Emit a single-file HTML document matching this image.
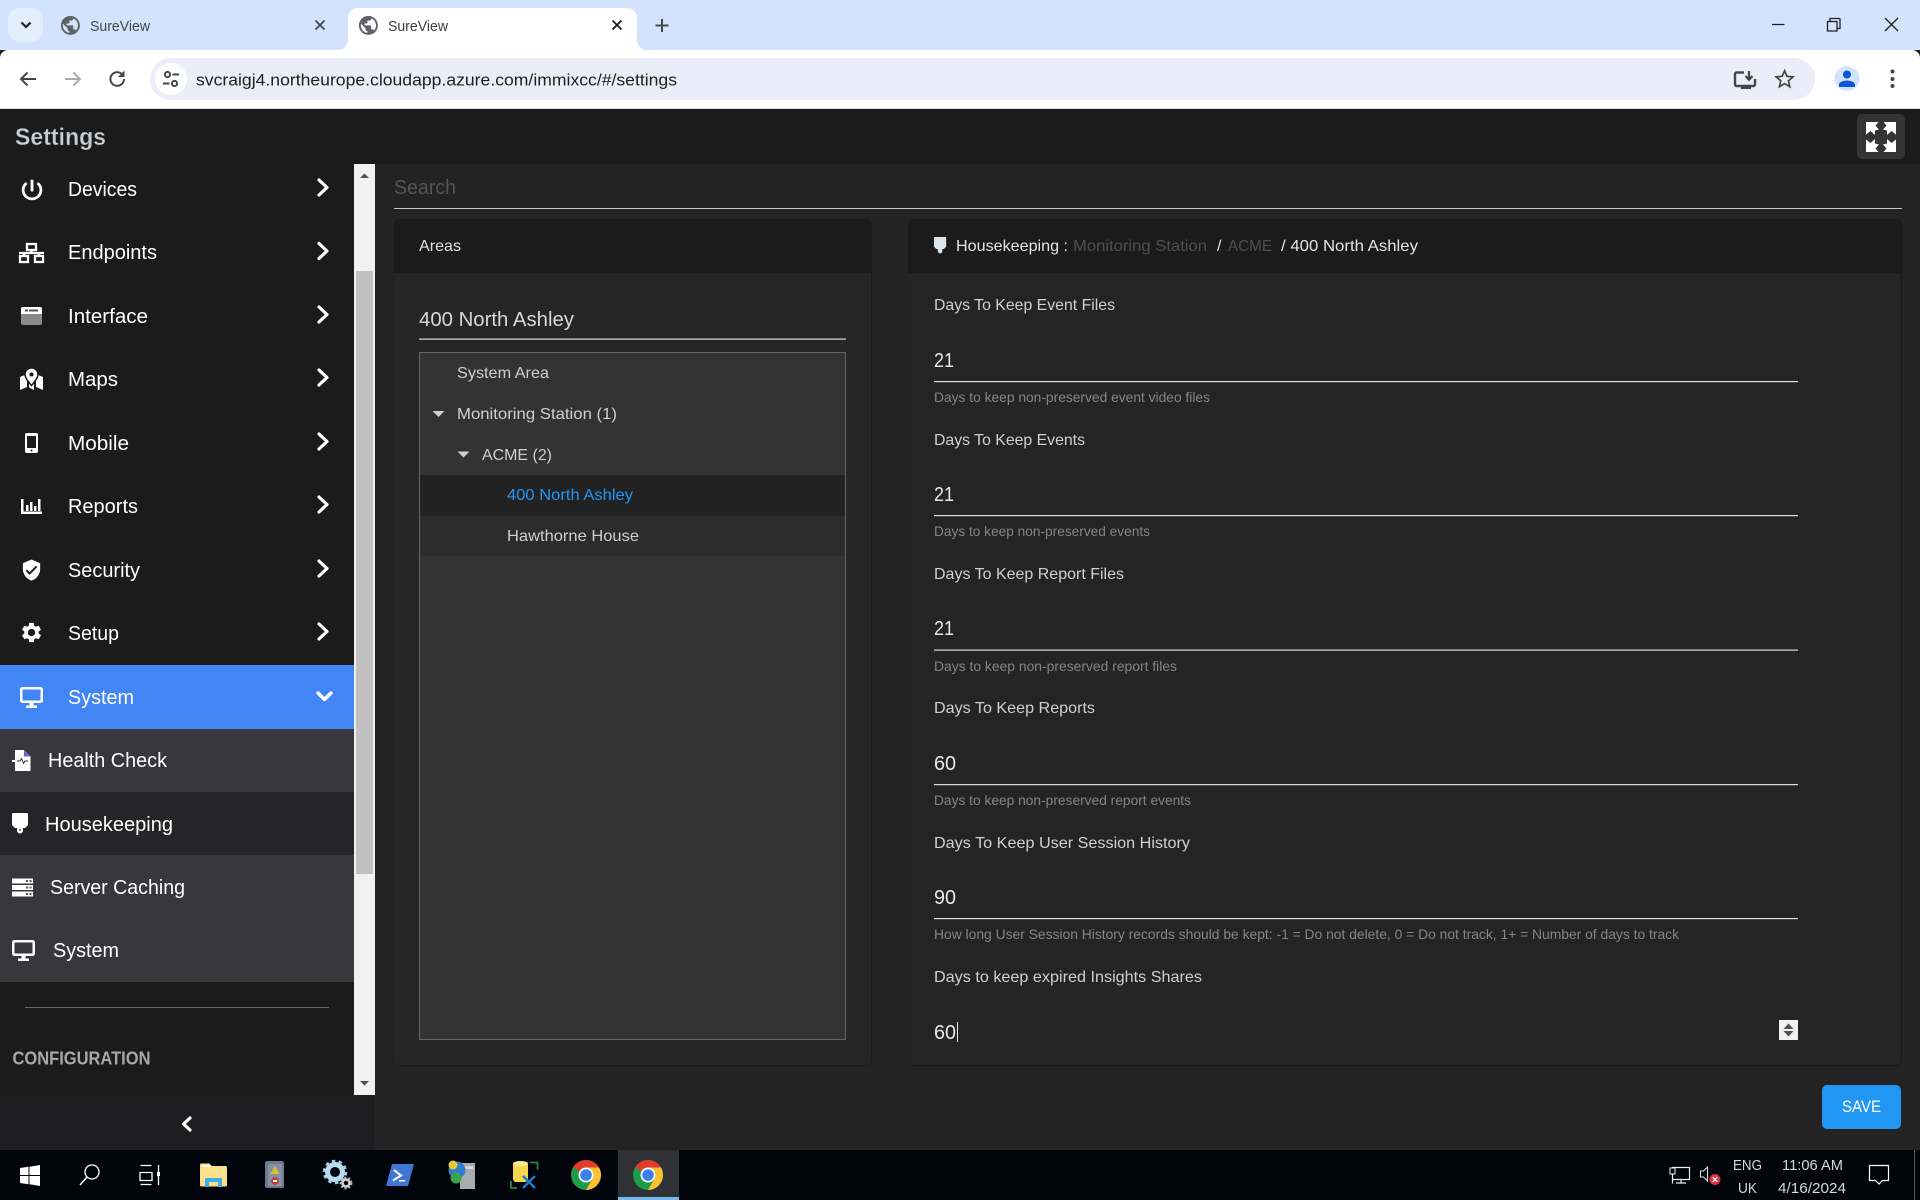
<!DOCTYPE html>
<html lang="en"><head><meta charset="utf-8"><title>SureView</title>
<style>
html,body{margin:0;padding:0;width:1920px;height:1200px;overflow:hidden;background:#232323}
svg{display:block}
text{font-family:"Liberation Sans",Arial,sans-serif;white-space:pre}
.nav{font-size:20px;fill:#fff}
.lab{font-size:16px;fill:#d0d0d0}
.val{font-size:20px;fill:#e8e8e8}
.hint{font-size:14px;fill:#858585}
.tree{font-size:16px;fill:#cfcfcf}
.tb{font-size:15px;fill:#d8d8d8}
.chev{fill:none;stroke:#fff;stroke-width:3.2;stroke-linecap:round;stroke-linejoin:round}
</style></head><body>
<svg width="1920" height="1200" viewBox="0 0 1920 1200" xmlns="http://www.w3.org/2000/svg">
<defs>
<path id="globe" d="M12 2C6.48 2 2 6.48 2 12s4.48 10 10 10 10-4.48 10-10S17.52 2 12 2zm-1 17.93c-3.95-.49-7-3.85-7-7.93 0-.62.08-1.21.21-1.79L9 15v1c0 1.1.9 2 2 2v1.93zm6.9-2.54c-.26-.81-1-1.39-1.9-1.39h-1v-3c0-.55-.45-1-1-1H8v-2h2c.55 0 1-.45 1-1V7h2c1.1 0 2-.9 2-2v-.41c2.93 1.19 5 4.06 5 7.41 0 2.08-.8 3.97-2.1 5.39z"/>
<g id="chrome">
<circle cx="0" cy="0" r="15" fill="#1e9c4b"/>
<path d="M-13 -7.5A15 15 0 0 1 13 -7.5L0 -7.5A7.5 7.5 0 0 0 -6.5 -3.7Z" fill="#e33b2e"/>
<path d="M13 -7.5A15 15 0 0 1 0 15L6.5 3.7A7.5 7.5 0 0 0 6.5 -3.7Z M13 -7.5L0 -7.5L6.5 -3.7Z" fill="#fbc02d"/>
<circle cx="0" cy="0" r="7.5" fill="#fff"/><circle cx="0" cy="0" r="5.8" fill="#3d7fe8"/>
</g>
<path id="tdown" d="M-6 -3L6 -3L0 3Z"/>
<path id="hk" d="M1 0h14a1 1 0 0 1 1 1v11l-3 3h-2v2.500a3 3 0 0 1-6 0V15H3l-3-3V1a1 1 0 0 1 1-1z"/>
<g id="desk"><path fill-rule="evenodd" d="M2.500 0h18A2.500 2.500 0 0 1 23 2.500v11a2.500 2.500 0 0 1-2.500 2.500h-18A2.500 2.500 0 0 1 0 13.500v-11A2.500 2.500 0 0 1 2.500 0zM2.500 2.500v11h18v-11z"/><path d="M9.500 16h4v2.500h3.500V21H6v-2.500h3.500z"/></g>
<path id="fsq" d="M1866 122H1878.500L1875.500 125.500L1879 129.500L1875 130.500V135L1870.500 131L1866 134.500Z"/>
</defs>

<!-- browser chrome -->
<rect x="0" y="0" width="1920" height="50" fill="#d3e3fd"/>
<rect x="8" y="8" width="35" height="34" rx="12" fill="#e4edfc"/>
<path d="M21.500 22.500L26 27L30.500 22.500" fill="none" stroke="#1f1f1f" stroke-width="2.200"/>
<use href="#globe" transform="translate(59,14) scale(.95)" fill="#5f6368"/>
<text x="90" y="31" font-size="15" fill="#444746" textLength="60" lengthAdjust="spacingAndGlyphs">SureView</text>
<path d="M315.500 20.500l9 9m0-9l-9 9" stroke="#444746" stroke-width="1.800" fill="none"/>
<path d="M0 108V58a8 8 0 0 1 8-8H338a10 10 0 0 0 10-10V18a10 10 0 0 1 10-10H627a10 10 0 0 1 10 10V40a10 10 0 0 0 10 10H1912a8 8 0 0 1 8 8V108Z" fill="#fff"/>
<use href="#globe" transform="translate(357,14) scale(.95)" fill="#5f6368"/>
<text x="388" y="31" font-size="15" fill="#3c4043" textLength="60" lengthAdjust="spacingAndGlyphs">SureView</text>
<path d="M612.500 20.500l9 9m0-9l-9 9" stroke="#1f1f1f" stroke-width="1.800" fill="none"/>
<path d="M662 19v13M655.500 25.500h13" stroke="#444746" stroke-width="2" fill="none"/>
<path d="M1772 24.500h12.500" stroke="#1f1f1f" stroke-width="1.300"/>
<path d="M1827.500 21.500h9.500v9.500h-9.500zM1830 21.500v-3h9.500a1 1 0 0 1 .500.500V28.500h-3" fill="none" stroke="#1f1f1f" stroke-width="1.300"/>
<path d="M1885 18l13 13m0-13l-13 13" stroke="#1f1f1f" stroke-width="1.300"/>

<path d="M36 79H21m6.500-6.500L21 79l6.500 6.500" fill="none" stroke="#444746" stroke-width="2"/>
<path d="M65 79h15m-6.500-6.500L80 79l-6.500 6.500" fill="none" stroke="#a9acaf" stroke-width="2"/>
<path d="M124 79a6.800 6.800 0 1 1-2-4.800" fill="none" stroke="#444746" stroke-width="2"/><path d="M124.500 70.500v6.500h-6.500z" fill="#444746"/>
<rect x="150" y="58" width="1665" height="42" rx="21" fill="#ebeef8"/>
<circle cx="171" cy="79" r="16" fill="#fff"/>
<circle cx="167.500" cy="74.500" r="2.600" fill="none" stroke="#444746" stroke-width="2"/><path d="M172.500 74.500h6.500" stroke="#444746" stroke-width="2"/>
<circle cx="174.500" cy="83.500" r="2.600" fill="none" stroke="#444746" stroke-width="2"/><path d="M163 83.500h6.500" stroke="#444746" stroke-width="2"/>
<text x="196" y="85.500" font-size="17" fill="#1f1f1f" textLength="481" lengthAdjust="spacingAndGlyphs">svcraigj4.northeurope.cloudapp.azure.com/immixcc/#/settings</text>
<path d="M1744 72.500h-7.500a1.500 1.500 0 0 0-1.500 1.500v10.500a1.500 1.500 0 0 0 1.500 1.500h17a1.500 1.500 0 0 0 1.500-1.500V79" fill="none" stroke="#444746" stroke-width="2.400"/>
<path d="M1741 87h10v2h-10z" fill="#444746"/>
<path d="M1749 71v8.500m-3.500-3.500l3.500 3.800 3.500-3.800" fill="none" stroke="#444746" stroke-width="2.200"/>
<path transform="translate(1772,66.500) scale(1.050)" fill="#444746" d="M22 9.240l-7.190-.62L12 2 9.190 8.630 2 9.240l5.460 4.730L5.820 21 12 17.270 18.180 21l-1.630-7.030L22 9.240zM12 15.400l-3.760 2.270 1-4.280-3.320-2.880 4.380-.38L12 6.100l1.710 4.040 4.380.38-3.320 2.880 1 4.280L12 15.400z"/>
<circle cx="1847" cy="78.500" r="12.500" fill="#d3e3fd"/>
<path transform="translate(1835,67)" fill="#0b57d0" d="M12 11.500c2.210 0 4-1.790 4-4s-1.790-4-4-4-4 1.790-4 4 1.790 4 4 4zm0 2c-2.670 0-8 1.340-8 4v2.500h16v-2.500c0-2.660-5.330-4-8-4z"/>
<circle cx="1892.500" cy="71.500" r="2" fill="#444746"/><circle cx="1892.500" cy="79" r="2" fill="#444746"/><circle cx="1892.500" cy="86" r="2" fill="#444746"/>
<rect x="0" y="108" width="1920" height="1" fill="#e2e2e2"/>

<!-- app top -->
<rect x="0" y="109" width="1920" height="55" fill="#1b1b1b"/>
<rect x="0" y="164" width="1920" height="986" fill="#232323"/>
<text x="15" y="145" font-size="24" font-weight="bold" fill="#c9ced3" textLength="91" lengthAdjust="spacingAndGlyphs" stroke="#1b1b1b" stroke-width=".25">Settings</text>
<rect x="1857" y="114" width="48" height="45" rx="5" fill="#343434"/>
<g fill="#fff"><use href="#fsq"/><use href="#fsq" transform="translate(3762,0) scale(-1,1)"/><use href="#fsq" transform="translate(0,274) scale(1,-1)"/><use href="#fsq" transform="translate(3762,274) scale(-1,-1)"/></g>

<!-- sidebar -->
<rect x="0" y="164" width="354" height="931" fill="#1b1b1b"/>
<rect x="0" y="1095" width="375" height="55" fill="#1e1e20"/>
<rect x="354" y="164" width="21" height="931" fill="#f1f1f1"/>
<rect x="356" y="271" width="17" height="603" fill="#c1c1c1"/>
<path d="M360 178l4.500-4.500 4.500 4.500z" fill="#505050"/><path d="M360 1081l4.500 4.500 4.500-4.500z" fill="#505050"/>

<path transform="translate(18.700,176.700) scale(1.110)" fill="#fff" stroke="#fff" stroke-width=".5" d="M13 3h-2v10h2V3zm4.830 2.170l-1.420 1.420C17.990 7.860 19 9.810 19 12c0 3.870-3.130 7-7 7s-7-3.130-7-7c0-2.190 1.010-4.140 2.580-5.420L6.170 5.170C4.230 6.820 3 9.260 3 12c0 4.970 4.030 9 9 9s9-4.030 9-9c0-2.740-1.230-5.180-3.170-6.830z"/>
<text class="nav" x="68" y="196" textLength="69" lengthAdjust="spacingAndGlyphs">Devices</text>
<path class="chev" d="M319 180l8 7.500-8 7.500"/>

<g fill="none" stroke="#fff" stroke-width="2.300"><rect x="27" y="244" width="9" height="6"/><rect x="20" y="256" width="8" height="6"/><rect x="35" y="256" width="8" height="6"/><path d="M31.500 250v3M19 253h25M24 253v3M39 253v3"/></g>
<text class="nav" x="68" y="259" textLength="89" lengthAdjust="spacingAndGlyphs">Endpoints</text>
<path class="chev" d="M319 243.500l8 7.500-8 7.500"/>

<rect x="21" y="307" width="21" height="18" rx="2" fill="#8a8a8a"/><path d="M23 307h17a2 2 0 0 1 2 2v5H21v-5a2 2 0 0 1 2-2z" fill="#fff"/><rect x="25" y="309.500" width="3" height="2" fill="#555"/><rect x="29" y="309.500" width="9" height="2" fill="#555"/>
<text class="nav" x="68" y="323" textLength="80" lengthAdjust="spacingAndGlyphs">Interface</text>
<path class="chev" d="M319 307l8 7.500-8 7.500"/>

<path fill="#fff" d="M20 377l7-3v13l-7 3zM29 376l2.500 10 2.500-10v14l-5-2.500zM36 374l7 3v13l-7-3z"/>
<path fill="#fff" stroke="#1b1b1b" stroke-width="1.500" fill-rule="evenodd" d="M31.500 368a6.500 6.500 0 0 1 6.500 6.500c0 3.500-4.300 8.500-6.500 11-2.200-2.500-6.500-7.500-6.500-11a6.500 6.500 0 0 1 6.500-6.500z"/><circle cx="31.500" cy="374.500" r="2" fill="#1b1b1b"/>
<text class="nav" x="68" y="386" textLength="50" lengthAdjust="spacingAndGlyphs">Maps</text>
<path class="chev" d="M319 370l8 7.500-8 7.500"/>

<rect x="25" y="433" width="13" height="20" rx="2" fill="#fff"/><rect x="27" y="436" width="9" height="12" fill="#1b1b1b"/><circle cx="31.500" cy="450.500" r="1" fill="#1b1b1b"/>
<text class="nav" x="68" y="450" textLength="61" lengthAdjust="spacingAndGlyphs">Mobile</text>
<path class="chev" d="M319 434l8 7.500-8 7.500"/>

<path fill="#fff" d="M21 499h2.500v12.500H42v2.500H21zM26 505h2.500v6H26zM30 502h2.500v9H30zM34 506h2.500v5H34zM38 499h2.500v12H38z"/>
<text class="nav" x="68" y="513" textLength="70" lengthAdjust="spacingAndGlyphs">Reports</text>
<path class="chev" d="M319 497l8 7.500-8 7.500"/>

<path transform="translate(20,558.500) scale(.96)" fill="#fff" d="M12 1L3 5v6c0 5.550 3.840 10.740 9 12 5.160-1.260 9-6.450 9-12V5l-9-4zm-2 16l-4-4 1.410-1.410L10 14.170l6.590-6.590L18 9l-8 8z"/>
<text class="nav" x="68" y="577" textLength="72" lengthAdjust="spacingAndGlyphs">Security</text>
<path class="chev" d="M319 561l8 7.500-8 7.500"/>

<path transform="translate(19.500,620.500) scale(1)" fill="#fff" d="M19.140 12.940c.04-.3.06-.61.06-.94 0-.32-.02-.64-.07-.94l2.030-1.580c.18-.14.23-.41.12-.61l-1.920-3.320c-.12-.22-.37-.29-.59-.22l-2.390.96c-.5-.38-1.030-.7-1.620-.94l-.36-2.540c-.04-.24-.24-.41-.48-.41h-3.840c-.24 0-.43.170-.47.410l-.36 2.540c-.59.240-1.130.570-1.620.940l-2.390-.96c-.22-.08-.47 0-.59.220L2.740 8.870c-.12.210-.08.470.12.610l2.030 1.580c-.05.300-.09.630-.09.940s.02.640.07.940l-2.030 1.580c-.18.140-.23.410-.12.610l1.920 3.320c.12.220.37.290.59.220l2.390-.96c.5.380 1.030.7 1.620.94l.36 2.540c.05.240.24.410.48.410h3.840c.24 0 .44-.17.47-.41l.36-2.540c.59-.24 1.130-.56 1.620-.94l2.390.96c.22.08.47 0 .59-.22l1.920-3.320c.12-.22.07-.47-.12-.61l-2.010-1.580zM12 15.600c-1.980 0-3.600-1.620-3.600-3.600s1.620-3.600 3.600-3.600 3.600 1.620 3.600 3.600-1.620 3.600-3.600 3.600z"/>
<text class="nav" x="68" y="640" textLength="51" lengthAdjust="spacingAndGlyphs">Setup</text>
<path class="chev" d="M319 624l8 7.500-8 7.500"/>

<rect x="0" y="665" width="354" height="64" fill="#4285f4"/>
<use href="#desk" transform="translate(20,687)" fill="#fff"/>
<text class="nav" x="68" y="704" textLength="66" lengthAdjust="spacingAndGlyphs">System</text>
<path d="M318 693l6.500 6.500 6.500-6.500" fill="none" stroke="#fff" stroke-width="3.400" stroke-linecap="round" stroke-linejoin="round"/>

<rect x="0" y="729" width="354" height="63" fill="#38383c"/>
<rect x="0" y="792" width="354" height="63" fill="#252527"/>
<rect x="0" y="855" width="354" height="127" fill="#38383c"/>

<path fill="#fff" d="M15 750h9l6.500 6.500V771H15v-9h-3v-2h3z"/><path d="M24 750l6.500 6.500H24z" fill="#7a5ccc"/><path d="M17 761h3l1.500-2.500 2 5 1.500-2.500h3" fill="none" stroke="#26262a" stroke-width=".9"/>
<text class="nav" x="48" y="767" textLength="119" lengthAdjust="spacingAndGlyphs">Health Check</text>
<use href="#hk" transform="translate(12,813)" fill="#fff"/><circle cx="20" cy="830" r="1" fill="#555"/>
<text class="nav" x="45" y="831" textLength="128" lengthAdjust="spacingAndGlyphs">Housekeeping</text>
<path fill="#fff" d="M12 878.500h21v5H12zM12 885h21v5H12zM12 891.500h21v5H12z"/><g fill="#555"><rect x="26" y="880" width="2" height="2"/><rect x="29.500" y="880" width="2" height="2"/><rect x="26" y="886.500" width="2" height="2"/><rect x="29.500" y="886.500" width="2" height="2"/><rect x="26" y="893" width="2" height="2"/><rect x="29.500" y="893" width="2" height="2"/></g>
<text class="nav" x="50" y="894" textLength="135" lengthAdjust="spacingAndGlyphs">Server Caching</text>
<use href="#desk" transform="translate(12,940)" fill="#fff"/>
<text class="nav" x="53" y="957" textLength="66" lengthAdjust="spacingAndGlyphs">System</text>

<rect x="25" y="1007" width="304" height="1" fill="#666"/>
<text x="12.500" y="1064.500" font-size="18" font-weight="bold" fill="#a8a8a8" textLength="138" lengthAdjust="spacingAndGlyphs">CONFIGURATION</text>
<path d="M190 1118l-6.500 6 6.500 6" fill="none" stroke="#fff" stroke-width="3.200" stroke-linecap="round" stroke-linejoin="round"/>

<!-- search -->
<text x="394" y="194" font-size="20" fill="#555" textLength="62" lengthAdjust="spacingAndGlyphs">Search</text>
<rect x="394" y="208" width="1508" height="1" fill="#c8c8c8"/>

<!-- areas panel -->
<rect x="394" y="219" width="478" height="847" rx="6" fill="#1a1a1a"/>
<rect x="394" y="219" width="477" height="846" rx="5" fill="#262626"/>
<path d="M394 273v-49a5 5 0 0 1 5-5H866a5 5 0 0 1 5 5v49z" fill="#1b1b1b"/>
<text class="lab" x="419" y="251" style="fill:#e0e0e0" textLength="42" lengthAdjust="spacingAndGlyphs">Areas</text>
<text x="419" y="326" font-size="20" fill="#d8d8d8" textLength="155" lengthAdjust="spacingAndGlyphs">400 North Ashley</text>
<rect x="419" y="338.500" width="427" height="1.200" fill="#ddd"/>
<rect x="419.500" y="352.500" width="426" height="687" fill="#333" stroke="#666"/>
<rect x="420" y="475" width="425" height="41" fill="#222"/>
<rect x="420" y="516" width="425" height="40" fill="#2c2c2c"/>
<text class="tree" x="457" y="378" textLength="92" lengthAdjust="spacingAndGlyphs">System Area</text>
<use href="#tdown" transform="translate(438.500,414)" fill="#d0d0d0"/>
<text class="tree" x="457" y="419" textLength="160" lengthAdjust="spacingAndGlyphs">Monitoring Station (1)</text>
<use href="#tdown" transform="translate(463.500,454.500)" fill="#d0d0d0"/>
<text class="tree" x="482" y="460" textLength="70" lengthAdjust="spacingAndGlyphs">ACME (2)</text>
<text class="tree" x="507" y="500" style="fill:#2196f3" textLength="126" lengthAdjust="spacingAndGlyphs">400 North Ashley</text>
<text class="tree" x="507" y="541" textLength="132" lengthAdjust="spacingAndGlyphs">Hawthorne House</text>

<!-- housekeeping panel -->
<rect x="908" y="219" width="994" height="847" rx="6" fill="#1a1a1a"/>
<rect x="908" y="219" width="993" height="846" rx="5" fill="#242424"/>
<path d="M908 273v-49a5 5 0 0 1 5-5H1896a5 5 0 0 1 5 5v49z" fill="#1b1b1b"/>
<use href="#hk" transform="translate(934,237) scale(.76,.8)" fill="#dde4ea"/>
<text class="lab" x="956" y="251" style="fill:#e4e4e4" textLength="112" lengthAdjust="spacingAndGlyphs">Housekeeping :</text>
<text class="lab" x="1073" y="251" style="fill:#4f4f4f" textLength="134" lengthAdjust="spacingAndGlyphs">Monitoring Station</text>
<text class="lab" x="1217" y="251" style="fill:#e4e4e4">/</text>
<text class="lab" x="1228" y="251" style="fill:#4f4f4f" textLength="44" lengthAdjust="spacingAndGlyphs">ACME</text>
<text class="lab" x="1281" y="251" style="fill:#e4e4e4" textLength="137" lengthAdjust="spacingAndGlyphs">/ 400 North Ashley</text>

<text class="lab" x="934" y="310" textLength="181" lengthAdjust="spacingAndGlyphs">Days To Keep Event Files</text>
<text class="val" x="934" y="367" textLength="20" lengthAdjust="spacingAndGlyphs">21</text>
<rect x="934" y="381" width="864" height="1.200" fill="#ddd"/>
<text class="hint" x="934" y="402" textLength="276" lengthAdjust="spacingAndGlyphs">Days to keep non-preserved event video files</text>

<text class="lab" x="934" y="445" textLength="151" lengthAdjust="spacingAndGlyphs">Days To Keep Events</text>
<text class="val" x="934" y="501" textLength="20" lengthAdjust="spacingAndGlyphs">21</text>
<rect x="934" y="515" width="864" height="1.200" fill="#ddd"/>
<text class="hint" x="934" y="536" textLength="216" lengthAdjust="spacingAndGlyphs">Days to keep non-preserved events</text>

<text class="lab" x="934" y="579" textLength="190" lengthAdjust="spacingAndGlyphs">Days To Keep Report Files</text>
<text class="val" x="934" y="635" textLength="20" lengthAdjust="spacingAndGlyphs">21</text>
<rect x="934" y="649.500" width="864" height="1.200" fill="#ddd"/>
<text class="hint" x="934" y="671" textLength="243" lengthAdjust="spacingAndGlyphs">Days to keep non-preserved report files</text>

<text class="lab" x="934" y="713" textLength="161" lengthAdjust="spacingAndGlyphs">Days To Keep Reports</text>
<text class="val" x="934" y="770" textLength="22" lengthAdjust="spacingAndGlyphs">60</text>
<rect x="934" y="784" width="864" height="1.200" fill="#ddd"/>
<text class="hint" x="934" y="805" textLength="257" lengthAdjust="spacingAndGlyphs">Days to keep non-preserved report events</text>

<text class="lab" x="934" y="848" textLength="256" lengthAdjust="spacingAndGlyphs">Days To Keep User Session History</text>
<text class="val" x="934" y="904" textLength="22" lengthAdjust="spacingAndGlyphs">90</text>
<rect x="934" y="918" width="864" height="1.200" fill="#ddd"/>
<text class="hint" x="934" y="939" textLength="745" lengthAdjust="spacingAndGlyphs">How long User Session History records should be kept: -1 = Do not delete, 0 = Do not track, 1+ = Number of days to track</text>

<text class="lab" x="934" y="982" textLength="268" lengthAdjust="spacingAndGlyphs">Days to keep expired Insights Shares</text>
<text class="val" x="934" y="1039" textLength="22" lengthAdjust="spacingAndGlyphs">60</text>
<rect x="957" y="1022" width="1" height="20" fill="#eee"/>
<rect x="1779" y="1020" width="19" height="20" fill="#f1f1f1"/>
<path d="M1783.500 1029l5-5.500 5 5.500zM1783.500 1031l5 5.500 5-5.500z" fill="#505050"/>

<rect x="1822" y="1085" width="79" height="44" rx="5" fill="#2196f3"/>
<text x="1842" y="1112" font-size="17" fill="#fff" textLength="39" lengthAdjust="spacingAndGlyphs">SAVE</text>

<!-- taskbar -->
<rect x="0" y="1150" width="1920" height="50" fill="#01040a"/>
<path fill="#fff" d="M20 1168l8.500-1.200v8.200H20zM29.500 1166.700l10.500-1.700v10H29.500zM20 1176h8.500v8.200l-8.500-1.200zM29.500 1176H40v10l-10.500-1.700z"/>
<circle cx="92" cy="1172" r="7" fill="none" stroke="#fff" stroke-width="1.300"/><path d="M87 1177l-7 8" stroke="#fff" stroke-width="1.400"/>
<path d="M140.500 1165.500h11M140.500 1184.500h11M140 1172.500h12v8h-12zM158.500 1165v20" fill="none" stroke="#fff" stroke-width="1.300"/><rect x="157" y="1172" width="3" height="4" fill="#fff"/>
<!-- explorer -->
<path d="M200 1165a1.500 1.500 0 0 1 1.500-1.500h8l2 2.500h14a1.500 1.500 0 0 1 1.500 1.500V1185a1.500 1.500 0 0 1-1.500 1.500h-24a1.500 1.500 0 0 1-1.500-1.500z" fill="#fbe08c"/>
<rect x="203" y="1165" width="8" height="2" fill="#fff"/>
<path d="M205 1178h17v9h-4v-5h-9v5h-4z" fill="#3fb0e8"/>
<!-- book -->
<rect x="265" y="1161" width="19" height="27" rx="2" fill="#6d7a8c"/><rect x="268" y="1164" width="14" height="22" fill="#8391a7"/>
<path d="M275 1166l4.500 8h-9z" fill="#e2c02c"/><circle cx="275" cy="1181" r="3.800" fill="#c8343a"/><rect x="273" y="1180" width="4" height="2" fill="#fff"/>
<!-- gear -->
<g fill="none"><circle cx="335" cy="1172" r="7.500" stroke="#b7dcef" stroke-width="5"/><circle cx="335" cy="1172" r="11" stroke="#a5cfe0" stroke-width="2.500" stroke-dasharray="3.500 3.400"/><circle cx="346" cy="1183" r="3.500" stroke="#d4d4d4" stroke-width="2.500"/><circle cx="346" cy="1183" r="5.500" stroke="#bbb" stroke-width="1.800" stroke-dasharray="2 2"/></g>
<!-- powershell -->
<path d="M392 1164h22l-6 22h-22z" fill="#3f78d4"/><path d="M394 1170l7 5.500-8 5" fill="none" stroke="#fff" stroke-width="2"/><rect x="399" y="1180" width="6" height="1.500" fill="#fff"/>
<!-- server globe -->
<rect x="460" y="1163" width="15" height="26" fill="#a8acaf"/><rect x="462" y="1166" width="11" height="3" fill="#d5d5d5"/>
<circle cx="457" cy="1170" r="8.500" fill="#2f7ed0"/><circle cx="456" cy="1178" r="5.500" fill="#3aa54a"/><circle cx="453" cy="1165" r="4.500" fill="#e9c93b"/>
<!-- db tool -->
<rect x="513" y="1162" width="15" height="20" rx="3" fill="#f6d650"/><ellipse cx="520.500" cy="1163.500" rx="7.500" ry="2.500" fill="#fbe88a"/>
<path d="M511 1181v7h6M530 1162.500h7.500v7" fill="none" stroke="#2e8540" stroke-width="1.800"/>
<path d="M523 1176l12 12M535 1176l-12 12" stroke="#1d78c8" stroke-width="2.600"/>
<!-- chrome -->
<use href="#chrome" transform="translate(586,1175)"/>
<rect x="618" y="1150" width="61" height="50" fill="#2f3136"/>
<rect x="618" y="1197" width="61" height="3" fill="#76b9ed"/>
<use href="#chrome" transform="translate(648,1175)"/>
<!-- tray -->
<path d="M1672.500 1167.500h17v12h-17zM1672.500 1183.500v-12M1676 1183h10M1681 1179.500v3.500" fill="none" stroke="#eee" stroke-width="1.200"/><rect x="1670" y="1168" width="5" height="6" fill="#01040a" stroke="#eee"/>
<path d="M1700.500 1171h3l4-4v14l-4-4h-3z" fill="none" stroke="#ddd" stroke-width="1.100"/>
<circle cx="1715" cy="1179.500" r="5.500" fill="#d9333f"/><path d="M1712.700 1177.200l4.600 4.600m0-4.600l-4.600 4.600" stroke="#fff" stroke-width="1.300"/>
<text class="tb" x="1733" y="1170" textLength="29" lengthAdjust="spacingAndGlyphs">ENG</text>
<text class="tb" x="1738" y="1193" textLength="19" lengthAdjust="spacingAndGlyphs">UK</text>
<text class="tb" x="1782" y="1170" textLength="61" lengthAdjust="spacingAndGlyphs">11:06 AM</text>
<text class="tb" x="1778" y="1193" textLength="68" lengthAdjust="spacingAndGlyphs">4/16/2024</text>
<path d="M1869.500 1165.500h19v15h-6l-3.500 3.500-3.500-3.500h-6z" fill="none" stroke="#fff" stroke-width="1.200"/>
<rect x="1914" y="1150" width="1" height="50" fill="#555"/>
</svg>
</body></html>
